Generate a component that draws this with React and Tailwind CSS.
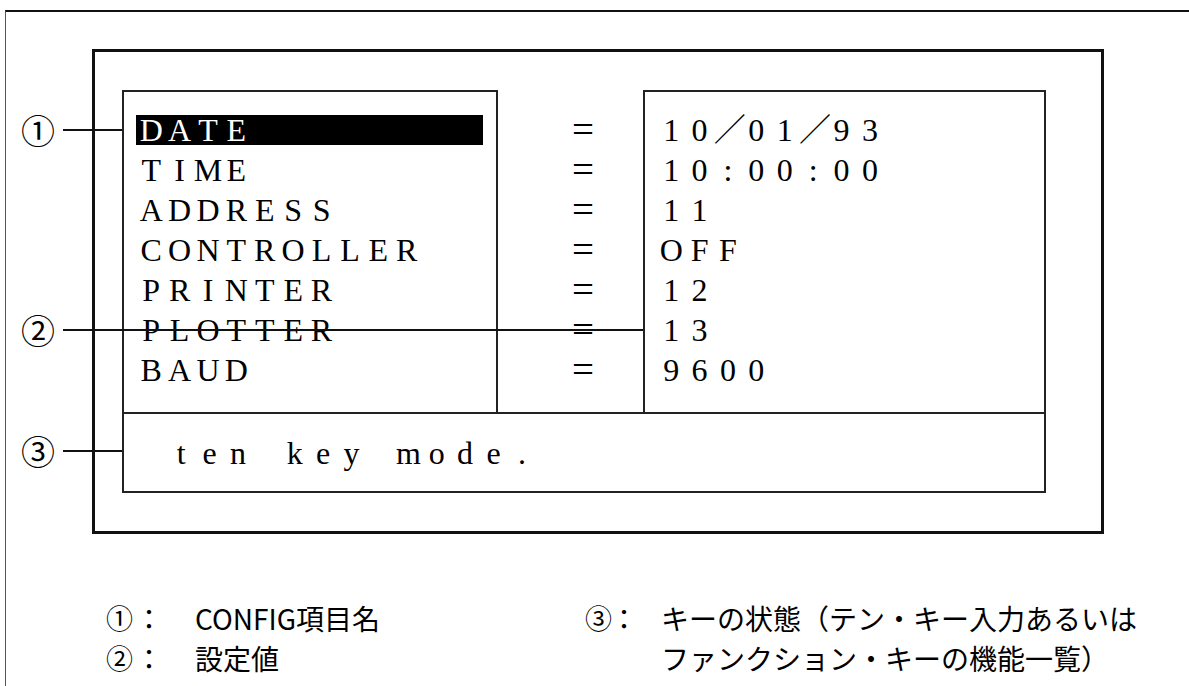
import * as React from 'react';

const ROWS = [
    ['DATE', '10／01／93'],
    ['TIME', '10:00:00'],
    ['ADDRESS', '11'],
    ['CONTROLLER', 'OFF'],
    ['PRINTER', '12'],
    ['PLOTTER', '13'],
    ['BAUD', '9600'],
];

// each character sits in its own fixed cell, like the terminal screen
function Spaced({ text, className = '' }) {
    return (
        <span className={`inline-flex ${className}`}>
            {Array.from(text).map((ch, i) => (
                <span key={i} className="w-[28.4px] shrink-0 text-center">
                    {ch === ' ' ? '\u00a0' : ch}
                </span>
            ))}
        </span>
    );
}

function Callout({ num, top, lineWidth }) {
    return (
        <div className={`absolute left-[15px] h-[40px] flex items-center ${top}`}>
            <span className="w-[29px] text-center text-[34px] leading-none font-['Noto_Sans_CJK_JP',sans-serif]">{num}</span>
            <div className={`ml-[13px] h-[2px] bg-[#111] ${lineWidth}`} />
        </div>
    );
}

function App() {
    return (
        <div className="w-[1189px] h-[686px] bg-white pt-[10px] pl-[5px] overflow-hidden text-black">
            <div className="relative h-[676px] border-t-2 border-l border-t-[#111] border-l-[#555]">

                <div className="mt-[37px] ml-[86px] w-[1012px] border-[3px] border-[#111] pt-[38px] pl-[27px] pb-[38px]">
                    <div className="w-[924px] font-['Liberation_Serif','Noto_Sans_CJK_JP',serif] text-[32px]">

                        <div className="flex h-[322px]">
                            <div className="w-[376px] border-t-2 border-l-2 border-r-2 border-[#222] pt-[18px] pl-[13px]">
                                {ROWS.map(([label], i) => (
                                    <div key={label} className="h-[40px] flex items-center leading-[40px]">
                                        {i === 0 ? (
                                            <span className="w-[347px] h-[30px] -ml-[1px] bg-black text-white flex items-center leading-[30px]">
                                                <Spaced text={label} className="pl-[1px]" />
                                            </span>
                                        ) : (
                                            <Spaced text={label} />
                                        )}
                                    </div>
                                ))}
                            </div>

                            <div className="w-[145px] pt-[20px] pl-[74px]">
                                {ROWS.map(([label]) => (
                                    <div key={label} className="h-[40px] leading-[40px] text-[39px]">=</div>
                                ))}
                            </div>

                            <div className="flex-1 border-t-2 border-l-2 border-r-2 border-[#222] pt-[18px] pl-[12px]">
                                {ROWS.map(([label, value]) => (
                                    <div key={label} className="h-[40px] flex items-center leading-[40px]">
                                        <Spaced text={value} />
                                    </div>
                                ))}
                            </div>
                        </div>

                        <div className="h-[81px] border-2 border-[#222] flex items-center pl-[43px] leading-[40px]">
                            <Spaced text="ten key mode." />
                        </div>
                    </div>
                </div>

                <div className="mt-[64px] flex font-['Noto_Sans_CJK_JP',sans-serif] text-[28px] leading-[40px]">
                    <div className="w-[579px] pl-[100px]">
                        <div className="flex items-center h-[40px]">
                            <span className="w-[29px] text-[27px]">①</span>
                            <span className="w-[28px] text-center">：</span>
                            <span className="ml-[32px]">CONFIG項目名</span>
                        </div>
                        <div className="flex items-center h-[40px]">
                            <span className="w-[29px] text-[27px]">②</span>
                            <span className="w-[28px] text-center">：</span>
                            <span className="ml-[32px]">設定値</span>
                        </div>
                    </div>
                    <div className="flex">
                        <div className="flex items-center h-[40px]">
                            <span className="w-[25px] text-[27px]">③</span>
                            <span className="w-[28px] text-center">：</span>
                        </div>
                        <div className="ml-[23px]">
                            <div className="h-[40px]">キーの状態（テン・キー入力あるいは</div>
                            <div className="h-[40px]">ファンクション・キーの機能一覧）</div>
                        </div>
                    </div>
                </div>

                <Callout num="①" top="top-[98px]" lineWidth="w-[59px]" />
                <Callout num="②" top="top-[298px]" lineWidth="w-[580px]" />
                <Callout num="③" top="top-[419px]" lineWidth="w-[59px]" />
            </div>
        </div>
    );
}

export default App;
